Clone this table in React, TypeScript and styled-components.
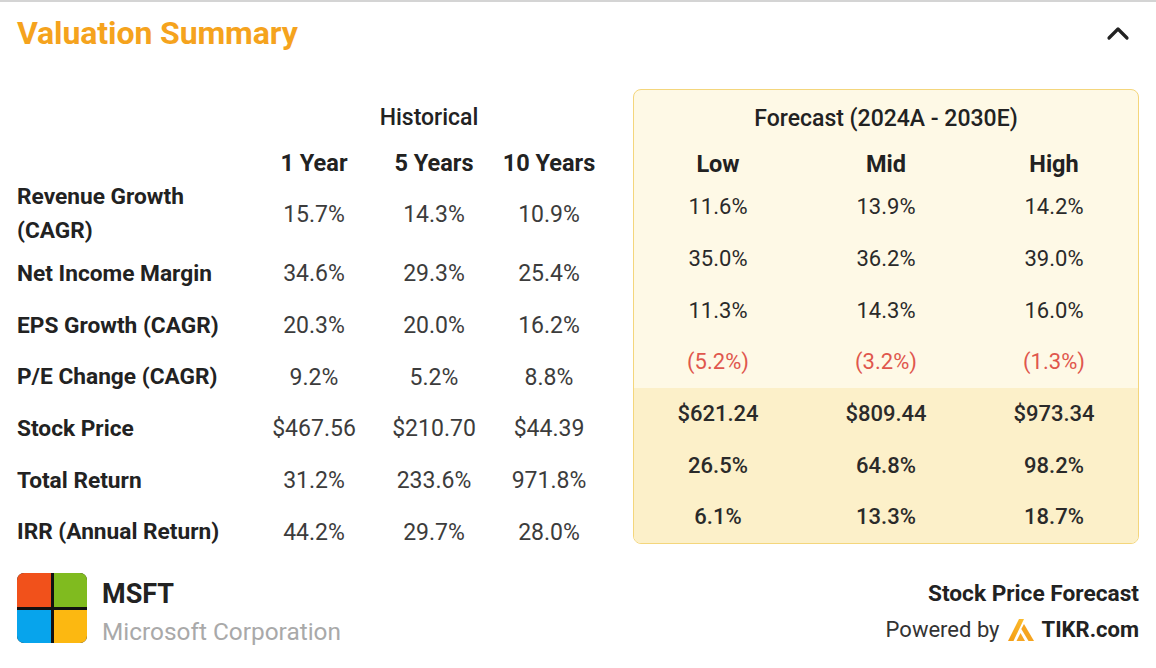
import React from "react";
import styled, { createGlobalStyle } from "styled-components";

const GlobalStyle = createGlobalStyle`
  html, body { margin: 0; padding: 0; background: #ffffff; }
  body { font-family: Roboto, "Noto Sans", "Liberation Sans", sans-serif; color: #222; }
  * { box-sizing: border-box; }
`;

const Page = styled.div`
  width: 1156px;
  height: 668px;
  border-top: 2px solid #d4d4d4;
  padding: 0 17px;
  overflow: hidden;
`;

const Header = styled.header`
  display: flex;
  align-items: center;
  justify-content: space-between;
  height: 36px;
  margin-top: 13px;
`;

const Title = styled.h2`
  margin: 0;
  font-size: 32px;
  line-height: 36px;
  font-weight: 700;
  color: #f5a31d;
  letter-spacing: -0.1px;
`;

const Collapse = styled.button`
  border: 0;
  background: none;
  padding: 0;
  margin-right: 8px;
  width: 26px;
  height: 26px;
  display: flex;
  align-items: center;
  justify-content: center;
  cursor: pointer;
`;

const Main = styled.section`
  display: grid;
  grid-template-columns: 587px 506px;
  column-gap: 29px;
  margin-top: 38px;
  align-items: start;
`;

const HistTable = styled.div`
  display: flex;
  flex-direction: column;
`;

const HistGrid = styled.div<{ $h: number }>`
  display: grid;
  grid-template-columns: 237px 120px 120px 110px;
  align-items: center;
  height: ${(p) => p.$h}px;
`;

const GroupTitle = styled.div<{ $span: string }>`
  grid-column: ${(p) => p.$span};
  text-align: center;
  font-size: 23px;
  font-weight: 500;
  color: #222;
`;

const ColHead = styled.div`
  text-align: center;
  font-size: 23.5px;
  font-weight: 700;
  color: #222;
`;

const RowLabel = styled.div`
  font-size: 22.7px;
  line-height: 34px;
  font-weight: 700;
  color: #222;
`;

const HistValue = styled.div`
  text-align: center;
  font-size: 23px;
  font-weight: 400;
  color: #3c3c3c;
`;

const ForecastBox = styled.div`
  border: 1px solid #f4d67c;
  border-radius: 8px;
  background: #fef9e6;
  overflow: hidden;
  display: flex;
  flex-direction: column;
`;

const ForeGrid = styled.div<{ $h: number; $band?: boolean }>`
  display: grid;
  grid-template-columns: repeat(3, 1fr);
  align-items: center;
  height: ${(p) => p.$h}px;
  background: ${(p) => (p.$band ? "#fcf0c9" : "transparent")};
`;

const ForeValue = styled.div<{ $neg?: boolean; $strong?: boolean }>`
  text-align: center;
  font-size: 22px;
  font-weight: ${(p) => (p.$strong ? 500 : 400)};
  color: ${(p) => (p.$neg ? "#e0574d" : "#2a2a2a")};
`;

const Footer = styled.footer`
  display: flex;
  justify-content: space-between;
  align-items: flex-start;
  margin-top: 15px;
`;

const Company = styled.div`
  display: flex;
  gap: 15px;
`;

const MsLogo = styled.div`
  width: 70px;
  height: 70px;
  border-radius: 7px;
  overflow: hidden;
  background: #111;
  display: grid;
  grid-template-columns: 1fr 1fr;
  grid-template-rows: 1fr 1fr;
  gap: 3px;
`;

const Tile = styled.span<{ $c: string }>`
  background: ${(p) => p.$c};
`;

const CompanyText = styled.div`
  display: flex;
  flex-direction: column;
  margin-top: 3px;
`;

const Ticker = styled.div`
  font-size: 27px;
  line-height: 36px;
  font-weight: 700;
  color: #222;
`;

const CompanyName = styled.div`
  font-size: 24.4px;
  line-height: 40px;
  color: #a9a9a9;
`;

const Credit = styled.div`
  display: flex;
  flex-direction: column;
  align-items: flex-end;
  margin-top: 3px;
`;

const CreditTitle = styled.div`
  font-size: 22.7px;
  line-height: 36px;
  font-weight: 700;
  color: #222;
`;

const Powered = styled.div`
  display: flex;
  align-items: center;
  gap: 8px;
  font-size: 22px;
  line-height: 36px;
  color: #333;
`;

const Brand = styled.span`
  font-weight: 700;
  color: #222;
`;

const Chevron = () => (
  <svg width="24" height="16" viewBox="0 0 24 16">
    <polyline points="3,13 12,4 21,13" fill="none" stroke="#222" strokeWidth="3.2" strokeLinecap="round" strokeLinejoin="round" />
  </svg>
);

const TikrMark = () => (
  <svg width="26" height="22" viewBox="0 0 26 22">
    <defs>
      <linearGradient id="tg" x1="0" y1="1" x2="1" y2="0">
        <stop offset="0" stopColor="#f39a12" />
        <stop offset="1" stopColor="#fbbd2e" />
      </linearGradient>
    </defs>
    <polygon points="11,0 16,0 5.5,22 0,22" fill="url(#tg)" />
    <polygon points="16,5 26,22 20.5,22 13.3,10" fill="#f5a41f" />
    <polygon points="12.5,14 17,22 8.5,22" fill="#f6a623" />
  </svg>
);

type HistRow = { label: string; values: string[]; tall?: boolean };
const historical: HistRow[] = [
  { label: "Revenue Growth\n(CAGR)", values: ["15.7%", "14.3%", "10.9%"], tall: true },
  { label: "Net Income Margin", values: ["34.6%", "29.3%", "25.4%"] },
  { label: "EPS Growth (CAGR)", values: ["20.3%", "20.0%", "16.2%"] },
  { label: "P/E Change (CAGR)", values: ["9.2%", "5.2%", "8.8%"] },
  { label: "Stock Price", values: ["$467.56", "$210.70", "$44.39"] },
  { label: "Total Return", values: ["31.2%", "233.6%", "971.8%"] },
  { label: "IRR (Annual Return)", values: ["44.2%", "29.7%", "28.0%"] },
];

type ForeRow = { values: string[]; neg?: boolean; band?: boolean };
const forecast: ForeRow[] = [
  { values: ["11.6%", "13.9%", "14.2%"] },
  { values: ["35.0%", "36.2%", "39.0%"] },
  { values: ["11.3%", "14.3%", "16.0%"] },
  { values: ["(5.2%)", "(3.2%)", "(1.3%)"], neg: true },
  { values: ["$621.24", "$809.44", "$973.34"], band: true },
  { values: ["26.5%", "64.8%", "98.2%"], band: true },
  { values: ["6.1%", "13.3%", "18.7%"], band: true },
];

const ROW = 51.7;

export default function App() {
  return (
    <>
      <GlobalStyle />
      <Page>
        <Header>
          <Title>Valuation Summary</Title>
          <Collapse aria-label="Collapse">
            <Chevron />
          </Collapse>
        </Header>

        <Main>
          <HistTable>
            <HistGrid $h={56}>
              <GroupTitle $span="2 / span 3">Historical</GroupTitle>
            </HistGrid>
            <HistGrid $h={35}>
              <span />
              <ColHead>1 Year</ColHead>
              <ColHead>5 Years</ColHead>
              <ColHead>10 Years</ColHead>
            </HistGrid>
            {historical.map((r) => (
              <HistGrid key={r.label} $h={r.tall ? 68 : ROW}>
                <RowLabel>
                  {r.label.split("\n").map((l) => (
                    <div key={l}>{l}</div>
                  ))}
                </RowLabel>
                {r.values.map((v, i) => (
                  <HistValue key={i}>{v}</HistValue>
                ))}
              </HistGrid>
            ))}
          </HistTable>

          <ForecastBox>
            <ForeGrid $h={56}>
              <GroupTitle $span="1 / span 3">Forecast (2024A - 2030E)</GroupTitle>
            </ForeGrid>
            <ForeGrid $h={35}>
              <ColHead>Low</ColHead>
              <ColHead>Mid</ColHead>
              <ColHead>High</ColHead>
            </ForeGrid>
            {forecast.map((r, idx) => (
              <ForeGrid key={idx} $h={ROW} $band={r.band}>
                {r.values.map((v, i) => (
                  <ForeValue key={i} $neg={r.neg} $strong={r.band}>
                    {v}
                  </ForeValue>
                ))}
              </ForeGrid>
            ))}
          </ForecastBox>
        </Main>

        <Footer>
          <Company>
            <MsLogo>
              <Tile $c="#f1511b" />
              <Tile $c="#80bb1f" />
              <Tile $c="#07a4ec" />
              <Tile $c="#fcb811" />
            </MsLogo>
            <CompanyText>
              <Ticker>MSFT</Ticker>
              <CompanyName>Microsoft Corporation</CompanyName>
            </CompanyText>
          </Company>
          <Credit>
            <CreditTitle>Stock Price Forecast</CreditTitle>
            <Powered>
              <span>Powered by</span>
              <TikrMark />
              <Brand>TIKR.com</Brand>
            </Powered>
          </Credit>
        </Footer>
      </Page>
    </>
  );
}
